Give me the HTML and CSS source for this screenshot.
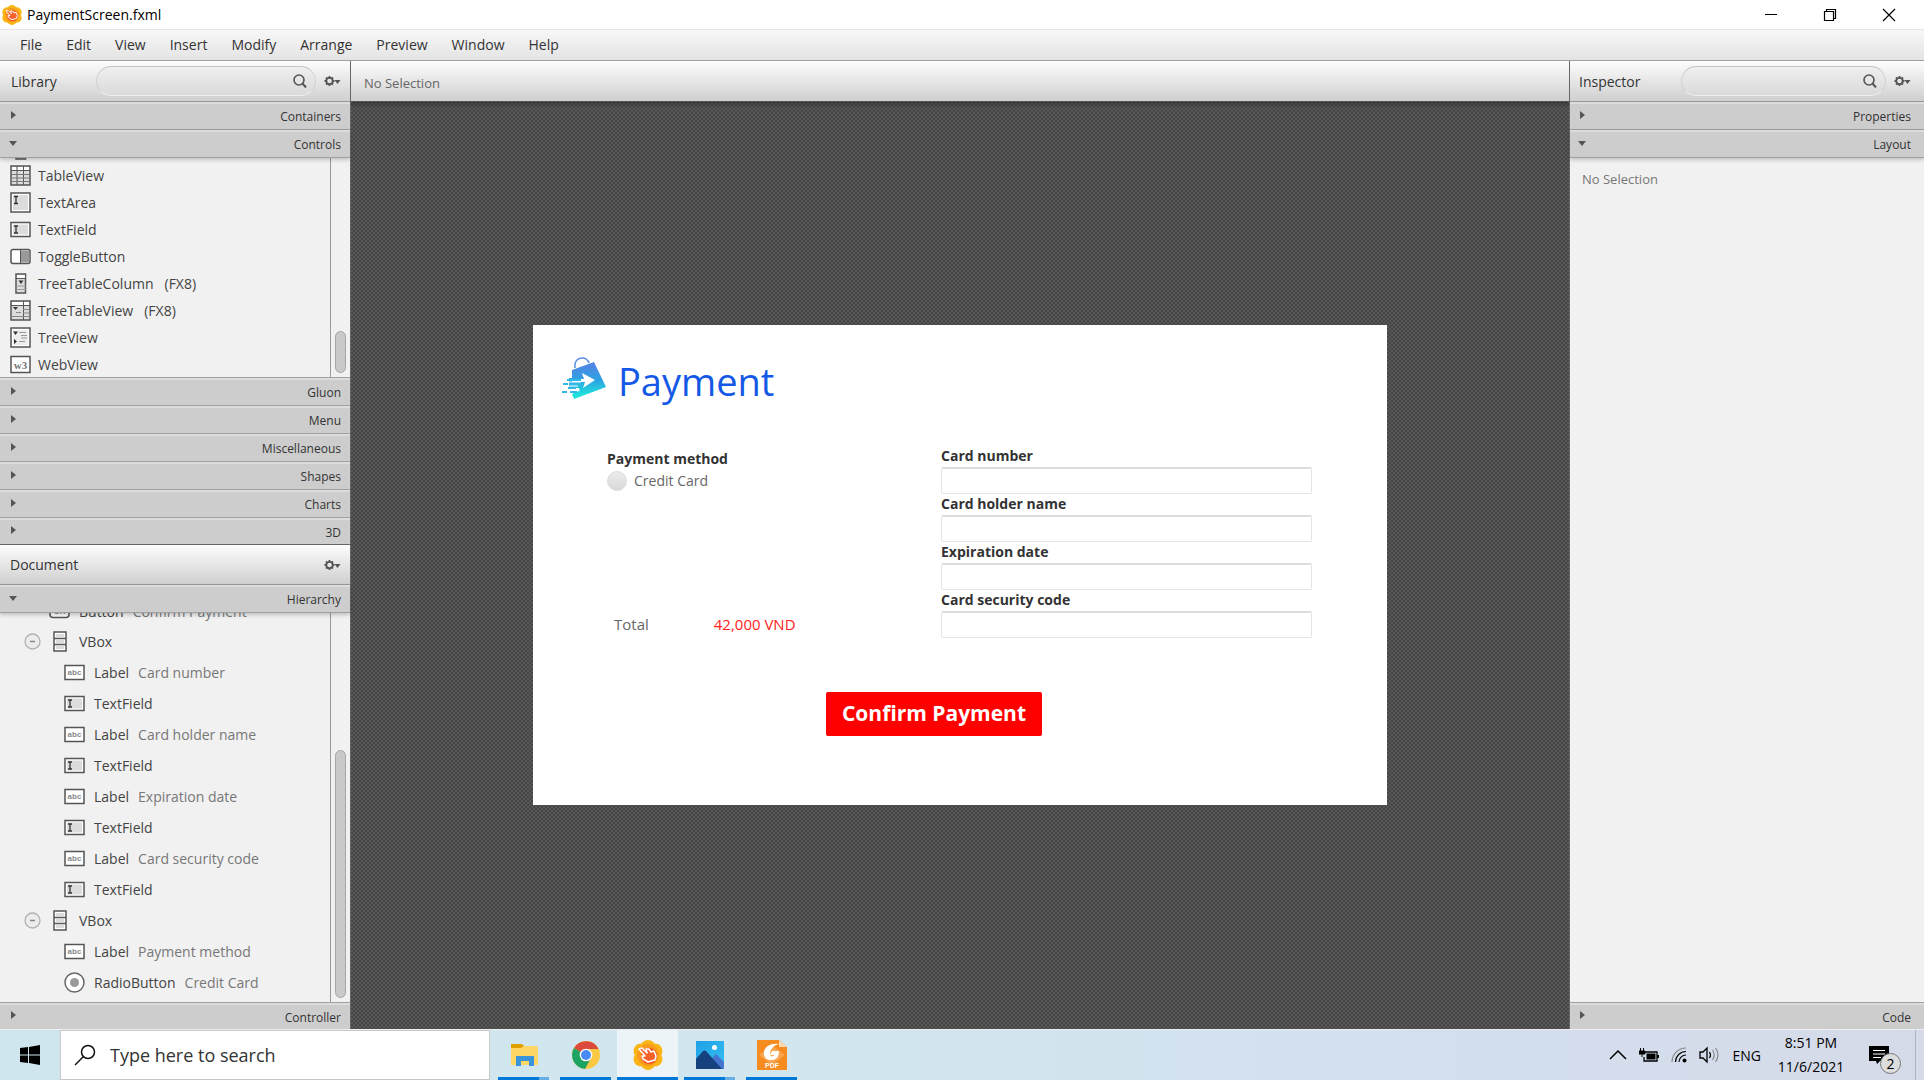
FILE: index.html
```html
<!DOCTYPE html>
<html lang="en">
<head>
<meta charset="utf-8">
<title>PaymentScreen.fxml</title>
<link rel="stylesheet" href="styles.css">
</head>
<body>
<svg class="defs" aria-hidden="true">
  <defs>
    <linearGradient id="bag-fill" x1="0" y1="0" x2="0" y2="1"><stop offset="0.1" stop-color="#4f86e4"/><stop offset="0.5" stop-color="#2ba4e2"/><stop offset="0.9" stop-color="#1fe3dc"/></linearGradient>
    <linearGradient id="sky" x1="0" y1="0" x2="1" y2="1"><stop offset="0" stop-color="#1fa0e6"/><stop offset="1" stop-color="#35c0f0"/></linearGradient>
    <symbol id="flower" viewBox="0 0 30 30">
      <g fill="#fbb514"><circle cx="15" cy="7.500" r="7.500"/><circle cx="15" cy="22.500" r="7.500"/><circle cx="8" cy="11" r="7.500"/><circle cx="22" cy="11" r="7.500"/><circle cx="8" cy="19" r="7.500"/><circle cx="22" cy="19" r="7.500"/></g>
      <circle cx="15" cy="15" r="11" fill="#f99a1c"/><circle cx="16" cy="16" r="8" fill="#f4511e"/>
      <path d="M6 9l3-1 5 5-1-4 3 0 2 3 3-1 2 5-1 4-7 2-5-3-1-3 3 0z" fill="#f4622a" stroke="#fff" stroke-width="1.500" stroke-linejoin="round"/>
    </symbol>
    <symbol id="gear" viewBox="0 0 17 12">
      <circle cx="5.500" cy="6" r="3.200" fill="none" stroke="#555" stroke-width="1.800"/>
      <path d="M5.500 1v2M5.500 9v2M.5 6h2M8.500 6h2M2 2.500l1.300 1.300M7.700 8.200L9 9.500M9 2.500L7.700 3.800M3.300 8.200L2 9.500" stroke="#555" stroke-width="1.800"/>
      <path d="M10.500 5h6L13.500 9z" fill="#555"/>
    </symbol>
    <symbol id="lens" viewBox="0 0 14 14"><circle cx="6" cy="6" r="5" fill="none" stroke="#555" stroke-width="1.600"/><path d="M9.500 9.500l3.500 4" stroke="#555" stroke-width="2"/></symbol>
    <symbol id="i-table" viewBox="0 0 21 21"><rect x="1" y="1" width="19" height="19" fill="#dcdcdc" stroke="#555" stroke-width="1.500"/><path d="M2 2h17v3H2z" fill="#fff"/><path d="M1 5.500h19M7 1v19M13.500 1v19" stroke="#555"/><path d="M1 9.500h19M1 13h19M1 16.500h19" stroke="#777"/></symbol>
    <symbol id="i-area" viewBox="0 0 21 21"><rect x="1" y="1" width="19" height="19" fill="#fff" stroke="#555" stroke-width="1.500"/><path d="M3 3h15v15H3z" fill="#dcdcdc"/><path d="M4 4.500h4M4 11.500h4M6 4v8" stroke="#333" stroke-width="1.300"/></symbol>
    <symbol id="i-field" viewBox="0 0 21 21"><rect x="1" y="3.500" width="19" height="14" fill="#fff" stroke="#555" stroke-width="1.500"/><path d="M3 5.500h15v10H3z" fill="#dcdcdc"/><path d="M4 7h4M4 14h4M6 7v7" stroke="#333" stroke-width="1.300"/></symbol>
    <symbol id="i-toggle" viewBox="0 0 21 21"><rect x="1" y="3.500" width="19" height="14" rx="2" fill="#fff" stroke="#555" stroke-width="1.500"/><path d="M11 4.500h8v12h-8z" fill="#999"/><path d="M10.500 3.500v14" stroke="#555"/></symbol>
    <symbol id="i-ttcol" viewBox="0 0 21 21"><rect x="6" y="1" width="9.500" height="19" fill="#dcdcdc" stroke="#555" stroke-width="1.500"/><path d="M7 2h8v3H7z" fill="#fff"/><path d="M6 5.500h10" stroke="#555"/><path d="M6 13h10M6 16.500h10" stroke="#999"/><path d="M8.500 7.500h5L11 11z" fill="#333"/></symbol>
    <symbol id="i-ttview" viewBox="0 0 21 21"><rect x="1" y="1" width="19" height="19" fill="#dcdcdc" stroke="#555" stroke-width="1.500"/><path d="M2 2h17v3H2z" fill="#fff"/><path d="M1 5.500h19M13.500 1v19" stroke="#555"/><path d="M6 12.500h5M1 16.500h19M13 9.500h7M13 13h7" stroke="#888"/><path d="M3 7h5l-2.500 3z" fill="#333"/></symbol>
    <symbol id="i-tree" viewBox="0 0 21 21"><rect x="1" y="1" width="19" height="19" fill="#fff" stroke="#555" stroke-width="1.500"/><path d="M3 3h15v15H3z" fill="#eee"/><path d="M3 4.500h5L5.500 8zM4 12l3 2.500L4 17z" fill="#333"/><path d="M9 5.500h7M11 8.500h6M11 11h6M9 14.500h6" stroke="#999"/></symbol>
    <symbol id="i-web" viewBox="0 0 21 21"><rect x="1" y="2.500" width="19" height="16" fill="#fff" stroke="#555" stroke-width="1.500"/><text x="10.500" y="15" text-anchor="middle" class="glyph-web">w3</text></symbol>
    <symbol id="i-label" viewBox="0 0 21 21"><rect x="1" y="3.500" width="19" height="14" fill="#fff" stroke="#555" stroke-width="1.500"/><text x="10.500" y="13" text-anchor="middle" class="glyph-abc">abc</text></symbol>
    <symbol id="i-button" viewBox="0 0 21 21"><rect x="1" y="3.500" width="19" height="14" rx="3" fill="#fff" stroke="#555" stroke-width="1.500"/><text x="10.500" y="14" text-anchor="middle" class="glyph-abc">OK</text></symbol>
    <symbol id="i-vbox" viewBox="0 0 14 21"><rect x="1" y="1" width="12" height="19" fill="#fff" stroke="#555" stroke-width="1.500"/><path d="M3 3h8v3H3zM3 9h8v3H3zM3 15h8v3H3z" fill="#dcdcdc"/><path d="M1 7.500h12M1 13.500h12" stroke="#555" stroke-width="1.500"/></symbol>
    <symbol id="i-radio" viewBox="0 0 21 21"><circle cx="10.500" cy="10.500" r="9.500" fill="#fff" stroke="#666" stroke-width="1.500"/><circle cx="10.500" cy="10.500" r="4.500" fill="#999"/></symbol>
    <symbol id="i-minus" viewBox="0 0 17 17"><circle cx="8.500" cy="8.500" r="7.500" fill="#ececec" stroke="#b2b2b2" stroke-width="1.300"/><path d="M6 8.500h5" stroke="#888" stroke-width="1.500"/></symbol>
  </defs>
</svg>

<div class="desktop">
  <header class="titlebar">
    <svg class="app-icon"><use href="#flower"/></svg>
    <span class="title">PaymentScreen.fxml</span>
    <button class="win-btn" aria-label="Minimize"><svg width="14" height="14"><path d="M1 6.500h12" stroke="#000"/></svg></button>
    <button class="win-btn" aria-label="Restore"><svg width="14" height="14"><path d="M1.500 3.500h9v9h-9zM3.500 3v-1.500h9v9H11" fill="none" stroke="#000" stroke-width="1.200"/></svg></button>
    <button class="win-btn" aria-label="Close"><svg width="14" height="14"><path d="M1 1l12 12M13 1L1 13" stroke="#000" stroke-width="1.200"/></svg></button>
  </header>
  <nav class="menubar">
    <button>File</button><button>Edit</button><button>View</button><button>Insert</button><button>Modify</button><button>Arrange</button><button>Preview</button><button>Window</button><button>Help</button>
  </nav>

  <main class="workspace">
    <aside class="side left">
      <div class="panel-head">
        <h2>Library</h2>
        <label class="search"><input type="text" aria-label="Search library"><svg width="14" height="14"><use href="#lens"/></svg></label>
        <button class="gear" aria-label="Library options"><svg width="17" height="12"><use href="#gear"/></svg></button>
      </div>
      <button class="section">Containers</button>
      <button class="section open">Controls</button>
      <div class="scroller library">
        <ul class="items">
          <li class="cut"><svg class="ico"><use href="#i-ttcol"/></svg></li>
          <li><svg class="ico"><use href="#i-table"/></svg>TableView</li>
          <li><svg class="ico"><use href="#i-area"/></svg>TextArea</li>
          <li><svg class="ico"><use href="#i-field"/></svg>TextField</li>
          <li><svg class="ico"><use href="#i-toggle"/></svg>ToggleButton</li>
          <li><svg class="ico"><use href="#i-ttcol"/></svg>TreeTableColumn<span class="tag">(FX8)</span></li>
          <li><svg class="ico"><use href="#i-ttview"/></svg>TreeTableView<span class="tag">(FX8)</span></li>
          <li><svg class="ico"><use href="#i-tree"/></svg>TreeView</li>
          <li><svg class="ico"><use href="#i-web"/></svg>WebView</li>
        </ul>
        <div class="track"><div class="thumb"></div></div>
      </div>
      <button class="section first">Gluon</button>
      <button class="section">Menu</button>
      <button class="section">Miscellaneous</button>
      <button class="section">Shapes</button>
      <button class="section">Charts</button>
      <button class="section last">3D</button>
      <div class="panel-head document">
        <h2>Document</h2>
        <button class="gear" aria-label="Document options"><svg width="17" height="12"><use href="#gear"/></svg></button>
      </div>
      <button class="section open">Hierarchy</button>
      <div class="scroller hierarchy">
        <ul class="tree">
          <li class="box cut"><svg class="ico"><use href="#i-button"/></svg>Button<span class="info">Confirm Payment</span></li>
          <li class="box"><svg class="fold"><use href="#i-minus"/></svg><svg class="vbox"><use href="#i-vbox"/></svg>VBox</li>
          <li><svg class="ico"><use href="#i-label"/></svg>Label<span class="info">Card number</span></li>
          <li><svg class="ico"><use href="#i-field"/></svg>TextField</li>
          <li><svg class="ico"><use href="#i-label"/></svg>Label<span class="info">Card holder name</span></li>
          <li><svg class="ico"><use href="#i-field"/></svg>TextField</li>
          <li><svg class="ico"><use href="#i-label"/></svg>Label<span class="info">Expiration date</span></li>
          <li><svg class="ico"><use href="#i-field"/></svg>TextField</li>
          <li><svg class="ico"><use href="#i-label"/></svg>Label<span class="info">Card security code</span></li>
          <li><svg class="ico"><use href="#i-field"/></svg>TextField</li>
          <li class="box"><svg class="fold"><use href="#i-minus"/></svg><svg class="vbox"><use href="#i-vbox"/></svg>VBox</li>
          <li><svg class="ico"><use href="#i-label"/></svg>Label<span class="info">Payment method</span></li>
          <li><svg class="ico"><use href="#i-radio"/></svg>RadioButton<span class="info">Credit Card</span></li>
        </ul>
        <div class="track"><div class="thumb"></div></div>
      </div>
      <button class="section first bottom">Controller</button>
    </aside>

    <section class="editor">
      <div class="panel-head crumb">No Selection</div>
      <div class="canvas">
        <form class="payment">
          <div class="brand">
            <svg class="logo" viewBox="0 0 44 44">
              <path d="M13 11C12 3 17 1 20 1c4 0 6 2 7 5" fill="none" stroke="#5b90e6" stroke-width="1.600"/>
              <path d="M10 13L32 5 44 30 12 42 10 37 17 34V31H7V21H10z" fill="url(#bag-fill)"/>
              <path d="M20 16l13 7-12 8 2-6H10v-3h12z" fill="#fff"/>
              <path d="M5 23h14M1 27h5M8 27h11M6 31h8M0 35h5M8 35h7" stroke="#2fb9e6" stroke-width="2"/>
              <path d="M7 25h12M4 29h12M8 33h10" stroke="#fff" stroke-width="1"/>
            </svg>
            <h1>Payment</h1>
          </div>
          <div class="details">
            <div class="method">
              <strong>Payment method</strong>
              <label class="choice"><input type="radio" name="method">Credit Card</label>
              <div class="total"><span>Total</span><span class="amount">42,000 VND</span></div>
            </div>
            <div class="card">
              <label for="number">Card number</label><input id="number" type="text">
              <label for="holder">Card holder name</label><input id="holder" type="text">
              <label for="expiry">Expiration date</label><input id="expiry" type="text">
              <label for="code">Card security code</label><input id="code" type="text">
            </div>
          </div>
          <button type="button" class="confirm">Confirm Payment</button>
        </form>
      </div>
    </section>

    <aside class="side right">
      <div class="panel-head">
        <h2>Inspector</h2>
        <label class="search"><input type="text" aria-label="Search inspector"><svg width="14" height="14"><use href="#lens"/></svg></label>
        <button class="gear" aria-label="Inspector options"><svg width="17" height="12"><use href="#gear"/></svg></button>
      </div>
      <button class="section">Properties</button>
      <button class="section open">Layout</button>
      <div class="empty">No Selection</div>
      <button class="section first bottom">Code</button>
    </aside>
  </main>

  <footer class="taskbar">
    <button class="start" aria-label="Start"><svg width="20" height="20"><path d="M0 3l8-1v7.500H0zM9 2l11-2v9.500H9zM0 10.500h8V18l-8-1zM9 10.500h11V20L9 18z"/></svg></button>
    <label class="task-search"><svg width="22" height="22"><circle cx="14" cy="8" r="6.500" fill="none" stroke="#111" stroke-width="1.500"/><path d="M9.500 12.500L1 21" stroke="#111" stroke-width="1.500"/></svg><input type="text" placeholder="Type here to search" aria-label="Type here to search"></label>
    <div class="apps">
      <button class="app many" aria-label="File Explorer"><svg width="30" height="30"><path d="M2 4h11l2 2v4H2z" fill="#e0a000"/><path d="M2 8h10l3-2h12q2 0 2 2v17H2z" fill="#ffd766"/><path d="M7 26V16h18v10h-5v-5h-8v5z" fill="#3b94d9"/></svg></button>
      <button class="app" aria-label="Chrome"><svg width="30" height="30"><circle cx="15" cy="15" r="14" fill="#fbc843"/><path d="M15 15L3 8A14 14 0 0 1 27.500 9H15z" fill="#db4a3d"/><path d="M15 15L2.900 8A14 14 0 0 0 14 29l6-11z" fill="#1da362"/><circle cx="15" cy="15" r="6.300" fill="#fff"/><circle cx="15" cy="15" r="5" fill="#4a8af4"/></svg></button>
      <button class="app active" aria-label="Scene Builder"><svg width="30" height="30"><use href="#flower"/></svg></button>
      <button class="app many" aria-label="Photos"><svg width="30" height="30"><path d="M1 1h28v28H1z" fill="url(#sky)"/><path d="M14 22l7-8 8 8v7H14z" fill="#4674cf"/><path d="M1 19l7-8q1.500-1 3 0l16 18H1z" fill="#15427f"/><circle cx="19.500" cy="7.500" r="2.500" fill="#fff"/></svg></button>
      <button class="app" aria-label="Foxit PDF"><svg width="30" height="30"><path d="M0 0h22l8 7v23H0z" fill="#f68b1f"/><path d="M22 0l8 7h-8z" fill="#fbd9b0"/><path d="M2 15L15 5l13 10-13 10z" fill="#f9a44e"/><path d="M22 4c-8-1-14 2-15 8-1 5 3 9 8 8 5 0 7-4 7-9h-7l-2 4h4c-1 2-4 2-4-1 0-5 4-9 9-10z" fill="#fff"/><text x="15" y="28" text-anchor="middle" class="glyph-pdf">PDF</text></svg></button>
    </div>
    <div class="tray">
      <svg width="18" height="12"><path d="M1 10l8-8 8 8" fill="none" stroke="#000" stroke-width="1.500"/></svg>
      <svg width="20" height="16"><path d="M6 5h12v9H5v-4" fill="none" stroke="#000" stroke-width="1.300"/><path d="M7.500 6.500h9v6h-9zM18 8h2v3h-2z"/><path d="M1.500 1v3M4.500 1v3M0 4h6v3H0zM3 7v3" stroke="#000"/></svg>
      <svg width="16" height="16"><g fill="none" stroke="#888" stroke-width="1.200"><path d="M1 15A14 14 0 0 1 15 1"/></g><g fill="none" stroke="#000" stroke-width="1.200"><path d="M4.500 15A10.500 10.500 0 0 1 15 4.500M8 15a7 7 0 0 1 7-7"/></g><circle cx="13.500" cy="13.500" r="2"/></svg>
      <svg width="21" height="18"><path d="M1 6h3l4-4v14l-4-4H1z" fill="none" stroke="#000" stroke-width="1.300"/><path d="M10.500 6q2 3 0 6" fill="none" stroke="#000" stroke-width="1.200"/><path d="M13.500 4q3.500 5 0 10M16.500 2q5 7 0 14" fill="none" stroke="#888" stroke-width="1.200"/></svg>
      <span class="lang">ENG</span>
      <div class="clock"><span>8:51 PM</span><span>11/6/2021</span></div>
      <button class="notes" aria-label="Notifications"><svg width="20" height="18"><path d="M0 0h20v15h-9l-3 3-1-3H0z"/><path d="M4 4.500h12M4 8h12M4 11.500h8" stroke="#fff"/></svg><span class="count">2</span></button>
    </div>
    <button class="peek" aria-label="Show desktop"></button>
  </footer>
</div>
</body>
</html>
```
FILE: styles.css
```css
* { box-sizing: border-box; }
html, body { height: 100%; }
body { margin: 0; font-family: "Open Sans", "Noto Sans", sans-serif; font-size: 14px; color: #444; overflow: hidden; }
button, input { font: inherit; color: inherit; border: 0; padding: 0; margin: 0; background: none; outline: 0; }
h1, h2, ul { margin: 0; padding: 0; font-weight: 400; list-style: none; }
svg { flex: none; display: block; }
.defs { position: absolute; width: 0; height: 0; }
.glyph-web { font: 700 11px "Liberation Serif", serif; fill: #777; }
.glyph-abc { font: 700 8px "Liberation Sans", sans-serif; fill: #888; }
.glyph-pdf { font: 700 7px "Liberation Sans", sans-serif; fill: #fff; }

.desktop { height: 100vh; display: flex; flex-direction: column; }

.titlebar { flex: none; height: 29px; padding-right: 6px; display: flex; align-items: center; background: #fff; color: #000; }
.app-icon { width: 20px; height: 20px; margin: 0 5px 0 2px; }
.title { flex: 1; }
.win-btn { width: 59px; height: 28px; display: flex; align-items: center; justify-content: center; }

.menubar { flex: none; height: 32px; padding: 0 8px 2px; display: flex; border-top: 1px solid #e6e6e6; border-bottom: 1px solid #a0a0a0; background: linear-gradient(#f7f7f7, #e4e4e4); color: #333; }
.menubar button { padding: 0 12px; }

.workspace { flex: 1; min-height: 0; display: grid; grid-template-columns: 351px 1fr 355px; }
.side { min-width: 0; min-height: 0; display: flex; flex-direction: column; background: #f1f1f1; }
.left { border-right: 1px solid #666; }
.right { border-left: 1px solid #666; }

.panel-head { flex: none; height: 41px; display: flex; align-items: center; padding: 0 9px 0 11px; background: linear-gradient(#fdfdfd, #cfcfcf); border-bottom: 1px solid #999; color: #333; }
.panel-head h2 { flex: 1; font-size: 14px; }
.search { width: 220px; height: 30px; margin-right: 8px; padding: 0 8px; display: flex; align-items: center; border: 1px solid; border-color: #c4c4c4 #d0d0d0 #f0f0f0; border-radius: 15px; background: linear-gradient(#efefef, #dadada); }
.right .search { width: 205px; }
.right .panel-head { padding-left: 9px; padding-right: 13px; }
.search input { flex: 1; min-width: 0; }
.panel-head.document { height: 40px; padding-left: 10px; }

.section { flex: none; height: 28px; padding: 2px 9px 0 11px; display: flex; align-items: center; justify-content: space-between; background: linear-gradient(#dcdcdc 2px, #cdcdcd 2px); border-bottom: 1px solid #a0a0a0; color: #333; font-size: 12px; }
.right .section { padding-right: 13px; padding-left: 10px; }
.section::before { content: ""; margin-bottom: 4px; border: 4px solid transparent; border-left: 5px solid #555; border-right: 0; }
.section.open { box-shadow: 0 2px 4px #0003; z-index: 1; padding-left: 9px; }
.right .section.open { padding-left: 8px; }
.section.open::before { margin-bottom: 2px; border: 4px solid transparent; border-top: 5px solid #555; border-bottom: 0; }
.section.first { border-top: 1px solid #a0a0a0; height: 29px; }
.section.last { height: 27px; border-bottom-color: #666; }
.section.bottom { height: 27px; border-bottom: 0; }

.scroller { display: flex; min-height: 0; overflow: hidden; }
.library { flex: none; height: 219px; }
.hierarchy { flex: 1; }
.items, .tree { flex: 1; }
.items li { height: 27px; padding-left: 10px; display: flex; align-items: center; gap: 7px; }
.items .cut { height: 4px; align-items: flex-end; overflow: hidden; padding-bottom: 2px; }
.tag { margin-left: 4px; }
.ico { width: 21px; height: 21px; }
.tree li { height: 31px; padding-left: 64px; display: flex; align-items: center; gap: 9px; }
.tree .box { padding-left: 24px; }
.tree .box.cut { height: 13px; padding-left: 49px; padding-bottom: 5px; align-items: flex-end; overflow: hidden; }
.fold { width: 17px; height: 17px; margin-right: 3px; }
.vbox { width: 14px; height: 21px; margin-right: 3px; }
.info { color: #777; }
.track { flex: none; width: 20px; border-left: 1px solid #999; padding: 4px; display: flex; flex-direction: column; justify-content: flex-end; }
.thumb { width: 11px; height: 42px; border: 1px solid #a6a6a6; border-radius: 6px; background: #c9c9c9; }
.hierarchy .thumb { height: 248px; }

.editor { min-width: 0; display: flex; flex-direction: column; }
.crumb { padding: 4px 13px 0; font-size: 13px; color: #666; border-bottom-color: #555; }
.canvas { flex: 1; min-height: 0; padding-bottom: 2px; display: flex; align-items: center; justify-content: center; background: linear-gradient(#0004, #0000 6px), conic-gradient(#464646 25%, #575757 0 50%, #464646 0 75%, #575757 0) 0 0 / 4px 4px; }
.payment { width: 854px; height: 480px; padding: 30px 75px 0 29px; background: #fff; }
.brand { display: flex; align-items: center; gap: 12px; height: 48px; }
.logo { width: 44px; height: 44px; }
.brand h1 { padding-top: 4px; font-size: 38px; line-height: 48px; color: #1459e6; }
.details { display: flex; justify-content: space-between; padding: 43px 0 0 45px; }
.method { display: flex; flex-direction: column; padding-top: 3px; color: #666; }
.method strong, .card label { color: #333; font-weight: 700; }
.method strong { line-height: 20px; }
.choice { display: flex; align-items: center; gap: 7px; height: 24px; }
.choice input { appearance: none; width: 20px; height: 20px; border: 1px solid #ddd; border-radius: 50%; background: linear-gradient(#ececec, #d8d8d8); }
.total { display: flex; gap: 65px; padding-left: 7px; margin-top: auto; margin-bottom: 4px; font-size: 15px; }
.amount { color: #f22; }
.card { width: 371px; display: flex; flex-direction: column; }
.card label { height: 21px; line-height: 20px; }
.card input { height: 27px; border: 1px solid #e4e4e4; border-top: 2px solid #ddd; border-radius: 2px; background: #fff; }
.confirm { display: block; margin: 54px 0 0 264px; width: 216px; height: 44px; padding-bottom: 2px; background: #f00; color: #fff; font-weight: 700; font-size: 21px; border-radius: 2px; }

.empty { flex: 1; padding: 12px; font-size: 13px; color: #777; }

.taskbar { flex: none; height: 51px; display: flex; align-items: stretch; background: linear-gradient(90deg, #cfe6ef, #d2e6ef 45%, #d3dfee 75%, #d5dae8); border-top: 1px solid #eee; color: #000; }
.start { width: 60px; display: flex; align-items: center; justify-content: center; }
.task-search { width: 430px; display: flex; align-items: center; gap: 14px; padding-left: 13px; border: 1px solid #c8c8c8; background: #fff; }
.task-search input { flex: 1; font-size: 18px; }
.task-search input::placeholder { color: #333; opacity: 1; }
.apps { display: flex; gap: 1px; padding-left: 3px; }
.app { width: 61px; display: flex; align-items: center; justify-content: center; background: linear-gradient(90deg, #0000 5px, #0078d7 5px 56px, #0000 56px) bottom / 100% 3px no-repeat; }
.app.many { background-image: linear-gradient(90deg, #0000 5px, #0078d7 5px 46px, #66aee6 46px 56px, #0000 56px); }
.app.active { background: linear-gradient(#0078d7, #0078d7) bottom / 100% 3px no-repeat #ecf4f8; }
.tray { margin-left: auto; display: flex; align-items: center; gap: 12px; padding-right: 14px; }
.lang { margin-left: 1px; }
.clock { width: 76px; text-align: center; display: flex; flex-direction: column; line-height: 24px; }
.notes { position: relative; width: 32px; height: 30px; margin-left: 8px; }
.count { position: absolute; right: 0; bottom: -4px; width: 21px; height: 21px; border: 1px solid #777; border-radius: 50%; background: #ddd; line-height: 19px; }
.peek { width: 9px; border-left: 1px solid #aab2c4; }
```
